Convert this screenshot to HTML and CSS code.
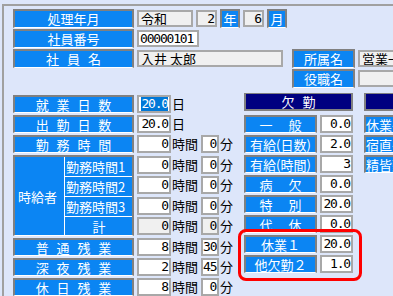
FILE: index.html
```html
<!DOCTYPE html>
<html lang="ja">
<head>
    <meta charset="UTF-8">
    <title>勤怠入力</title>
    <link rel="stylesheet" href="styles.css">
</head>
<body>
    <div class="frame">
        <div class="head">
            <div class="hrow">
                <div class="lbl l-main">処理年月</div>
                <div class="box gray w-era">令和</div>
                <div class="box gray num w-ym">2</div>
                <div class="lbl unit-box">年</div>
                <div class="box gray num w-ym">6</div>
                <div class="lbl unit-box">月</div>
            </div>
            <div class="hrow">
                <div class="lbl l-main">社員番号</div>
                <div class="box digits w-code">00000101</div>
            </div>
            <div class="hrow">
                <div class="lbl l-main spaced">社 員 名</div>
                <div class="box gray w-name">入井 太郎</div>
                <div class="lbl l-side">所属名</div>
                <div class="box gray w-dept">営業一課</div>
            </div>
            <div class="hrow post">
                <div class="lbl l-side">役職名</div>
                <div class="box gray w-dept"></div>
            </div>
        </div>

        <div class="lower">
            <div class="left">
                <div class="row">
                    <div class="lbl l-main spaced">就 業 日 数</div>
                    <div class="box num w-val"><span class="sel">20.0</span></div>
                    <span class="unit">日</span>
                </div>
                <div class="row">
                    <div class="lbl l-main spaced">出 勤 日 数</div>
                    <div class="box num w-val">20.0</div>
                    <span class="unit">日</span>
                </div>
                <div class="row">
                    <div class="lbl l-main spaced">勤 務 時 間</div>
                    <div class="box num w-val">0</div>
                    <span class="unit">時間</span>
                    <div class="box num w-min">0</div>
                    <span class="unit">分</span>
                </div>

                <div class="hourly">
                    <div class="hblock">
                        <div class="hname">時給者</div>
                        <div class="hsub">勤務時間1</div>
                        <div class="hsub">勤務時間2</div>
                        <div class="hsub">勤務時間3</div>
                        <div class="hsub total">計</div>
                    </div>
                    <div class="hvals">
                        <div class="trow">
                            <div class="box num w-val">0</div>
                            <span class="unit">時間</span>
                            <div class="box num w-min">0</div>
                            <span class="unit">分</span>
                        </div>
                        <div class="trow">
                            <div class="box num w-val">0</div>
                            <span class="unit">時間</span>
                            <div class="box num w-min">0</div>
                            <span class="unit">分</span>
                        </div>
                        <div class="trow">
                            <div class="box num w-val">0</div>
                            <span class="unit">時間</span>
                            <div class="box num w-min">0</div>
                            <span class="unit">分</span>
                        </div>
                        <div class="trow">
                            <div class="box gray num w-val">0</div>
                            <span class="unit">時間</span>
                            <div class="box gray num w-min">0</div>
                            <span class="unit">分</span>
                        </div>
                    </div>
                </div>

                <div class="row">
                    <div class="lbl l-main spaced">普 通 残 業</div>
                    <div class="box num w-val">8</div>
                    <span class="unit">時間</span>
                    <div class="box num w-min">30</div>
                    <span class="unit">分</span>
                </div>
                <div class="row">
                    <div class="lbl l-main spaced">深 夜 残 業</div>
                    <div class="box num w-val">2</div>
                    <span class="unit">時間</span>
                    <div class="box num w-min">45</div>
                    <span class="unit">分</span>
                </div>
                <div class="row">
                    <div class="lbl l-main spaced">休 日 残 業</div>
                    <div class="box num w-val">8</div>
                    <span class="unit">時間</span>
                    <div class="box num w-min">0</div>
                    <span class="unit">分</span>
                </div>
            </div>

            <div class="absence">
                <div class="cap spaced">欠 勤</div>
                <div class="arow">
                    <div class="lbl l-abs wide">一 般</div>
                    <div class="box num w-abs">0.0</div>
                </div>
                <div class="arow">
                    <div class="lbl l-abs">有給(日数)</div>
                    <div class="box num w-abs">2.0</div>
                </div>
                <div class="arow">
                    <div class="lbl l-abs">有給(時間)</div>
                    <div class="box num w-abs">3</div>
                </div>
                <div class="arow">
                    <div class="lbl l-abs wide">病 欠</div>
                    <div class="box num w-abs">0.0</div>
                </div>
                <div class="arow">
                    <div class="lbl l-abs wide">特 別</div>
                    <div class="box num w-abs">20.0</div>
                </div>
                <div class="arow">
                    <div class="lbl l-abs wide">代 休</div>
                    <div class="box num w-abs">0.0</div>
                </div>
                <div class="arow">
                    <div class="lbl l-abs">休業１</div>
                    <div class="box num w-abs">20.0</div>
                </div>
                <div class="arow">
                    <div class="lbl l-abs">他欠勤２</div>
                    <div class="box num w-abs">1.0</div>
                </div>
            </div>

            <div class="extra">
                <div class="cap"></div>
                <div class="arow">
                    <div class="lbl l-extra">休業手当</div>
                </div>
                <div class="arow">
                    <div class="lbl l-extra">宿直手当</div>
                </div>
                <div class="arow">
                    <div class="lbl l-extra">精皆勤手当</div>
                </div>
            </div>
        </div>
    </div>

    <!-- highlight drawn over the 休業１ / 他欠勤２ rows -->
    <div class="mark"></div>
</body>
</html>
```

FILE: styles.css
```css
html, body {
    margin: 0;
    overflow: hidden;
}
body {
    position: relative;
    width: 393px;
    height: 296px;
    background-color: #dde6fa;
    font-family: "Noto Sans CJK JP", "Noto Sans", sans-serif;
    font-size: 13px;
    color: #000;
}
.frame {
    width: 520px;
    height: 400px;
    margin: 4px 0 0 2px;
    padding: 3px 0 0 9px;
    border-top: 2px solid #a0a0a0;
    border-left: 2px solid #a0a0a0;
}

/* labels and boxes */
.lbl {
    box-sizing: border-box;
    background-color: #0b85f3;
    color: #fff;
    border: 2px solid #808080;
    border-bottom: 1px solid #fff;
    text-align: center;
    white-space: nowrap;
    overflow: hidden;
}
.spaced {
    word-spacing: 5px;
}
.wide {
    word-spacing: 13px;
}
.box {
    box-sizing: border-box;
    height: 17px;
    padding: 0 2px;
    border: 2px solid #a8a8a8;
    background-color: #fff;
    line-height: 13px;
    white-space: nowrap;
    overflow: hidden;
}
.box.gray {
    background-color: #f0f0f0;
}
.num, .digits {
    font-family: "DejaVu Sans Mono", "Liberation Mono", monospace;
    font-size: 13px;
    letter-spacing: -1.2px;
}
.num {
    text-align: right;
    padding: 0 1px 0 0;
}
.sel {
    background-color: #0078d7;
    color: #fff;
}
.unit {
    line-height: 18px;
}

/* header */
.hrow {
    display: flex;
    align-items: center;
    gap: 3px;
    height: 19px;
    margin-bottom: 1px;
}
.hrow .lbl {
    height: 19px;
    line-height: 16px;
}
.hrow.post {
    margin-left: 279px;
}
.l-main {
    width: 121px;
}
.w-era {
    width: 56px;
}
.w-ym {
    width: 21px;
}
.unit-box {
    width: 20px;
}
.w-code {
    width: 62px;
    padding-left: 1px;
}
.w-name {
    width: 146px;
}
.l-side {
    width: 63px;
    margin-left: 6px;
}
.hrow.post .l-side {
    margin-left: 0;
}
.w-dept {
    width: 70px;
}

/* lower part */
.lower {
    display: flex;
    margin-top: 5px;
}
.left {
    width: 231px;
    padding-top: 2px;
}
.row, .trow {
    display: flex;
    align-items: center;
    gap: 1px;
    height: 18px;
    margin-bottom: 2px;
}
.trow {
    margin-bottom: 0;
}
.row .lbl {
    height: 18px;
    line-height: 15px;
    margin-right: 2px;
}
.row .box, .trow .box, .arow .box {
    height: 18px;
    line-height: 14px;
}
.w-val {
    width: 34px;
}
.w-min {
    width: 18px;
    margin-left: 2px;
}

/* hourly block */
.hourly {
    display: flex;
    gap: 3px;
    margin-bottom: 2px;
}
.hblock {
    box-sizing: border-box;
    width: 121px;
    height: 81px;
    display: grid;
    grid-template-columns: 49px 1fr;
    grid-template-rows: repeat(4, 1fr);
    background-color: #0b85f3;
    color: #fff;
    border: 2px solid #808080;
    border-bottom: 1px solid #fff;
}
.hname {
    grid-row: 1 / 5;
    display: flex;
    align-items: center;
    justify-content: center;
    padding-right: 4px;
}
.hsub {
    display: flex;
    align-items: center;
    padding-left: 1px;
    border-left: 1px solid #fff;
    border-top: 1px solid #fff;
    white-space: nowrap;
}
.hsub:nth-child(2) {
    border-top: none;
}
.hsub.total {
    justify-content: center;
}
.hvals {
    display: grid;
    grid-template-rows: repeat(4, 1fr);
    align-items: center;
    height: 81px;
}

/* absence columns */
.absence {
    width: 109px;
}
.cap {
    box-sizing: border-box;
    height: 18px;
    margin-bottom: 4px;
    background-color: #000080;
    color: #fff;
    border: 2px solid #808080;
    border-top-width: 1px;
    text-align: center;
    line-height: 15px;
}
.arow {
    display: flex;
    gap: 3px;
    height: 18px;
    margin-bottom: 2px;
}
.arow .lbl {
    height: 18px;
    line-height: 15px;
}
.l-abs {
    width: 73px;
}
.w-abs {
    width: 33px;
}
.extra {
    width: 100px;
    margin-left: 11px;
}
.l-extra {
    width: 80px;
    text-align: left;
}

.mark {
    position: absolute;
    left: 238px;
    top: 229px;
    width: 124px;
    height: 52px;
    box-sizing: border-box;
    border: 3px solid #f00;
    border-radius: 8px;
}
```
